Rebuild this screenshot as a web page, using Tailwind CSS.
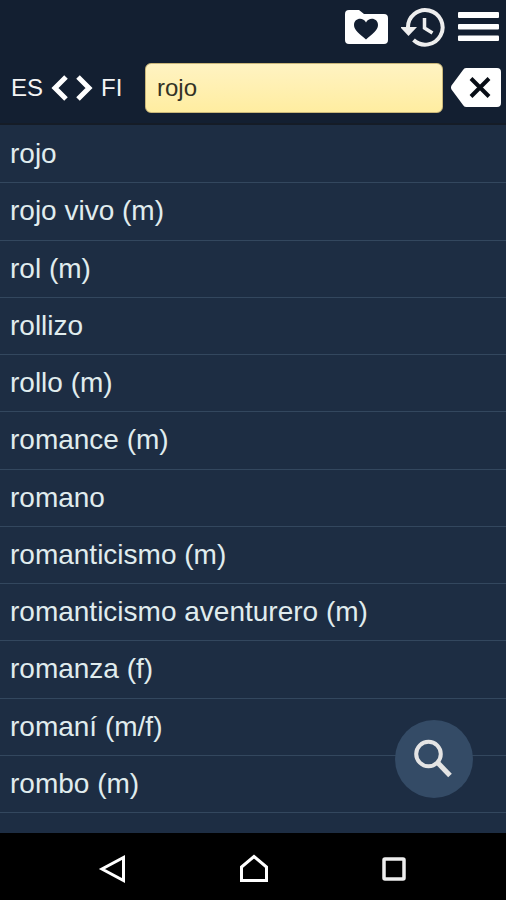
<!DOCTYPE html>
<html lang="es">
<head>
<meta charset="utf-8">
<meta name="viewport" content="width=device-width, initial-scale=1">
<title>Diccionario ES-FI</title>
<script src="https://cdn.jsdelivr.net/npm/@tailwindcss/browser@4"></script>
</head>
<body class="flex min-h-screen flex-col bg-[#1d2d43] font-['Liberation_Sans',Arial,sans-serif] text-[#e0ecee]">
<header class="flex h-[125px] flex-col border-b-2 border-[#151c27] bg-[#131f31] text-white">
  <div class="flex h-[54px] items-center justify-end gap-3 pr-[7px]">
    <button type="button" aria-label="Favoritos"><svg class="block h-9 w-[44px]" viewBox="0 0 44 36"><path fill="#fff" d="M4 1h10l5 4h20q4 0 4 4v22q0 4-4 4H4q-4 0-4-4V5q0-4 4-4z"/><path fill="#131f31" d="M21 30.500C15 25 9 21.500 9 16c0-7 9-8.500 12-2.500 3-6 12-4.500 12 2.500 0 5.500-6 9-12 14.500z"/></svg></button>
    <button type="button" aria-label="Historial"><svg class="block h-10 w-[44px]" viewBox="0 0 44 40"><g fill="none" stroke="#eee" stroke-width="4"><path d="M7 21A17.300 17.300 0 1 1 12.500 33"/><path d="M23.500 11v10l8 5" stroke-width="3.500"/></g><path fill="#eee" d="M-1 20h17l-8.500 9z"/></svg></button>
    <button type="button" aria-label="Menú"><svg class="block h-[30px] w-[42px]" viewBox="0 0 42 30" fill="#fff"><rect x="1" width="41" height="6" rx="1"/><rect x="1" y="12" width="41" height="5.500" rx="1"/><rect x="1" y="23.500" width="41" height="5.500" rx="1"/></svg></button>
  </div>
  <form class="flex h-[68px] items-center pr-1 pl-[11px]">
    <button type="button" aria-label="Cambiar idiomas: ES, FI" class="mr-4 flex w-[118px] shrink-0 items-center gap-2 text-2xl text-[#f4f4f4]">
      <span>ES</span>
      <svg class="h-[26px] w-[42px]" viewBox="0 0 42 26" fill="none" stroke="#fff" stroke-width="5"><path d="M15 2 4 13l11 11M27 2l11 11-11 11"/></svg>
      <span>FI</span>
    </button>
    <input type="text" aria-label="Buscar palabra" value="rojo" class="h-[50px] min-w-0 flex-1 rounded-md border border-[#c9b679] bg-linear-to-b from-[#fff3c2] to-[#ffeda0] px-[11px] text-2xl text-[#333326] outline-none">
    <button type="button" aria-label="Borrar" class="ml-2"><svg class="block h-10 w-[51px]" viewBox="0 0 51 40"><path fill="#fff" d="M15 0h31q4 0 4 4v31q0 4-4 4H15q-2 0-3-2L.5 21.500q-1-2 0-4L12 2q1-2 3-2z"/><path d="m20 10.500 18 18M38 10.500l-18 18" stroke="#080d15" stroke-width="4"/></svg></button>
  </form>
</header>
<main class="flex flex-1 flex-col pt-px pb-5">
  <ul class="flex flex-1 flex-col text-[28px] leading-8 *:flex *:flex-1 *:items-center *:border-b *:border-[#33475e] *:px-2.5">
    <li>rojo</li>
    <li>rojo vivo (m)</li>
    <li>rol (m)</li>
    <li>rollizo</li>
    <li>rollo (m)</li>
    <li>romance (m)</li>
    <li>romano</li>
    <li>romanticismo (m)</li>
    <li>romanticismo aventurero (m)</li>
    <li>romanza (f)</li>
    <li>romaní (m/f)</li>
    <li>rombo (m)</li>
  </ul>
</main>
<button type="button" aria-label="Buscar" class="fixed right-[33px] bottom-[102px] flex size-[78px] items-center justify-center rounded-full bg-[#344b66]"><svg class="size-10" viewBox="0 0 40 40" fill="none" stroke="#e4e4e4"><circle cx="14.500" cy="15" r="12.300" stroke-width="4"/><path d="m24 24 12 12.500" stroke-width="5"/></svg></button>
<nav aria-label="Sistema" class="grid h-[67px] grid-cols-[1fr_auto_1fr] items-center bg-black px-[97px] pt-1">
  <button type="button" aria-label="Atrás" class="justify-self-start"><svg class="block size-8" viewBox="0 0 32 32" fill="none" stroke="#fff" stroke-width="3"><path d="M26.500 4.500v23L5 16z"/></svg></button>
  <button type="button" aria-label="Inicio"><svg class="block size-8" viewBox="0 0 32 32" fill="none" stroke="#fff" stroke-width="3"><path d="M4.500 27.500V14L17 3.500 29.500 14v13.500z"/></svg></button>
  <button type="button" aria-label="Recientes" class="justify-self-end"><svg class="block size-8" viewBox="0 0 32 32" fill="none" stroke="#eee" stroke-width="3.500"><rect x="7" y="6" width="20" height="20" rx="1"/></svg></button>
</nav>
</body>
</html>
